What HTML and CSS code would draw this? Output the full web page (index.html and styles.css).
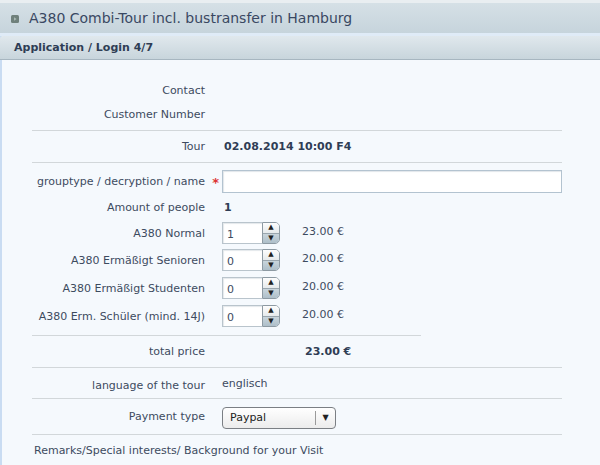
FILE: index.html
```html
<!DOCTYPE html>
<html>
<head>
<meta charset="utf-8">
<link rel="stylesheet" href="styles.css">
</head>
<body>
<div class="titlebar">
  <span class="ticon"><svg width="8" height="8" viewBox="0 0 8 8"><rect x="0" y="0" width="8" height="8" rx="1.5" fill="#6f807b"/><path d="M3 2.2 L5.6 4 L3 5.8Z" fill="#a9b8b3"/></svg></span>
  <span class="ttext">A380 Combi-Tour incl. bustransfer in Hamburg</span>
</div>
<div class="gap"></div>
<div class="panel">
  <div class="phead">Application / Login 4/7</div>
  <div class="group g1">
    <div class="row r24"><div class="lbl">Contact</div><div class="gut"></div><div class="val"></div></div>
    <div class="row r24"><div class="lbl">Customer Number</div><div class="gut"></div><div class="val"></div></div>
  </div>
  <div class="sep"></div>
  <div class="row r31"><div class="lbl">Tour</div><div class="gut"></div><div class="val bold">02.08.2014 10:00 F4</div></div>
  <div class="sep"></div>
  <div class="group g3">
    <div class="row r26"><div class="lbl">grouptype / decryption / name</div><div class="gut"><span class="req">*</span></div><input class="tinput" type="text"></div>
    <div class="row r26"><div class="lbl">Amount of people</div><div class="gut"></div><div class="val bold">1</div></div>
    <div class="row r26">
      <div class="lbl">A380 Normal</div><div class="gut"></div>
      <div class="spin"><input class="num" type="text" value="1"><div class="btns"><span class="up">▲</span><span class="dn">▼</span></div></div>
      <div class="price">23.00 €</div>
    </div>
    <div class="row r28">
      <div class="lbl">A380 Ermäßigt Senioren</div><div class="gut"></div>
      <div class="spin"><input class="num" type="text" value="0"><div class="btns"><span class="up">▲</span><span class="dn">▼</span></div></div>
      <div class="price">20.00 €</div>
    </div>
    <div class="row r28">
      <div class="lbl">A380 Ermäßigt Studenten</div><div class="gut"></div>
      <div class="spin"><input class="num" type="text" value="0"><div class="btns"><span class="up">▲</span><span class="dn">▼</span></div></div>
      <div class="price">20.00 €</div>
    </div>
    <div class="row r28">
      <div class="lbl">A380 Erm. Schüler (mind. 14J)</div><div class="gut"></div>
      <div class="spin"><input class="num" type="text" value="0"><div class="btns"><span class="up">▲</span><span class="dn">▼</span></div></div>
      <div class="price">20.00 €</div>
    </div>
  </div>
  <div class="sep short"></div>
  <div class="row r31"><div class="lbl">total price</div><div class="gut"></div><div class="val bold total">23.00 €</div></div>
  <div class="sep"></div>
  <div class="row r30"><div class="lbl lang">language of the tour</div><div class="gut"></div><div class="val">englisch</div></div>
  <div class="sep"></div>
  <div class="row r35">
    <div class="lbl">Payment type</div><div class="gut"></div>
    <div class="select"><span class="stext">Paypal</span><span class="sarrow">▼</span></div>
  </div>
  <div class="sep"></div>
  <div class="row r30 remarks">Remarks/Special interests/ Background for your Visit</div>
</div>
</body>
</html>
```
FILE: styles.css
```css
html, body {
  margin: 0;
  padding: 0;
  background: #f5f9fd;
  font-family: "DejaVu Sans", Verdana, sans-serif;
  font-size: 11px;
  color: #3d4b5f;
  overflow: hidden;
}
.titlebar {
  height: 30px;
  border-top: 3px solid #e9eef1;
  background: linear-gradient(#d5e0e6, #c6d4dc);
  display: flex;
  align-items: center;
  padding-left: 11px;
}
.ticon {
  display: flex;
  width: 8px;
  height: 8px;
  margin-top: 1px;
}
.ttext {
  margin-left: 10px;
  font-size: 14px;
  color: #3a4862;
}
.gap {
  height: 3px;
  background: #dfebf7;
}
.panel {
  border-left: 2px solid #c9dcf2;
  height: 430px;
}
.phead {
  height: 23px;
  border-bottom: 1px solid #a7b6c0;
  background: linear-gradient(#e0e8ed, #c8d5dc);
  display: flex;
  align-items: center;
  padding-left: 12px;
  font-weight: bold;
  color: #2f3d55;
  margin-left: -2px;
  padding-left: 14px;
  border-top-left-radius: 3px;
}
.group.g1 { padding: 18px 0 4px; }
.group.g3 { padding: 5px 0 5px; }
.row {
  display: flex;
  align-items: center;
}
.r24 { height: 24px; }
.r26 { height: 26px; }
.r28 { height: 28px; }
.r30 { height: 30px; }
.r31 { height: 31px; }
.r35 { height: 35px; }
.lbl {
  width: 203px;
  flex: none;
  text-align: right;
}
.lbl.lang { padding-top: 4px; }
.gut {
  width: 17px;
  flex: none;
  text-align: right;
}
.req {
  color: #d33;
  font-size: 13px;
  font-weight: bold;
  padding-right: 3px;
  position: relative;
  top: 1px;
}
.val { color: #3d4b5f; }
.bold {
  font-weight: bold;
  color: #2f3d55;
  padding-left: 2px;
}
.val.total { padding-left: 83px; }
.sep {
  margin-left: 30px;
  width: 530px;
  height: 0;
  border-top: 1px solid #d2d7da;
}
.sep.short { width: 389px; }
.tinput {
  box-sizing: border-box;
  width: 340px;
  height: 23px;
  margin: 0;
  border: 1px solid #b3c3d0;
  background: #fff;
  box-shadow: inset 1px 1px 1px #e2e6ea;
  outline: none;
}
.spin {
  display: flex;
  height: 22px;
}
.num {
  box-sizing: border-box;
  width: 40px;
  height: 22px;
  margin: 0;
  border: 1px solid #b9c4cc;
  border-right: none;
  background: #fff;
  font-family: "DejaVu Sans", Verdana, sans-serif;
  font-size: 11px;
  color: #3d4b5f;
  padding: 2px 0 0 4px;
  outline: none;
  box-shadow: inset 1px 1px 1px #e4e8eb;
}
.btns {
  box-sizing: border-box;
  width: 18px;
  height: 22px;
  border: 1px solid #8d9aa3;
  border-radius: 0 5px 5px 0;
  overflow: hidden;
  display: flex;
  flex-direction: column;
}
.btns span {
  flex: 1;
  display: flex;
  align-items: center;
  justify-content: center;
  font-size: 7px;
  color: #222;
  line-height: 1;
}
.btns .up { background: linear-gradient(#fdfdfd, #e6eaec); border-bottom: 1px solid #9aa6ae; }
.btns .dn { background: linear-gradient(#c9d5dc, #aebfc9); }
.price {
  margin-left: 22px;
  color: #3d4b5f;
  padding-bottom: 4px;
}
.select {
  box-sizing: border-box;
  width: 114px;
  height: 22px;
  border: 1px solid #7b7f84;
  border-radius: 4px;
  background: linear-gradient(#ffffff, #ececec);
  display: flex;
  align-items: center;
  position: relative;
  top: 1px;
}
.stext {
  flex: 1;
  padding-left: 7px;
  color: #222;
}
.sarrow {
  width: 19px;
  height: 14px;
  border-left: 1px solid #9a9a9a;
  font-size: 8px;
  color: #222;
  display: flex;
  align-items: center;
  justify-content: center;
}
.remarks {
  padding-left: 32px;
}
```
